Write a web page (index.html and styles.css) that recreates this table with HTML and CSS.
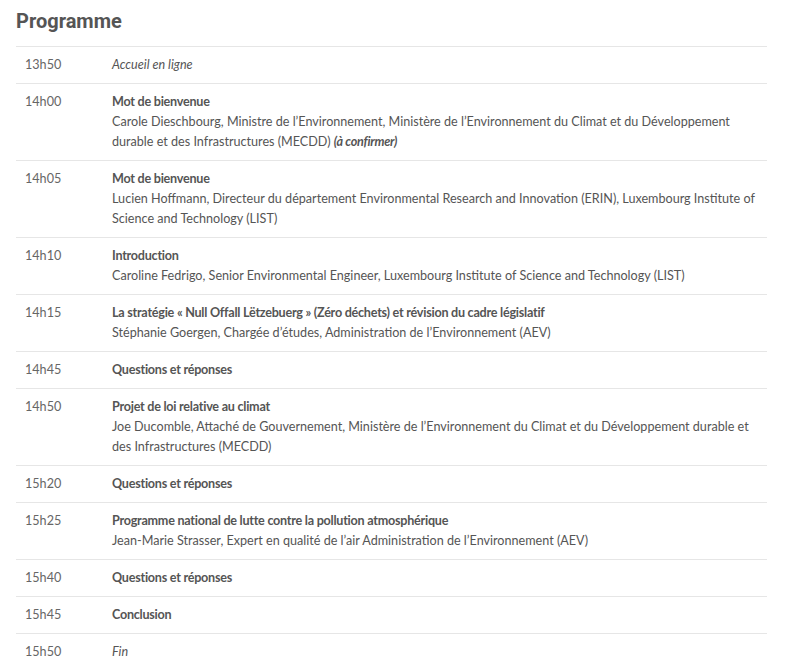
FILE: index.html
```html
<!DOCTYPE html>
<html lang="fr">
<head>
<meta charset="utf-8">
<link rel="stylesheet" href="styles.css">
</head>
<body>
<h2 class="title">Programme</h2>
<table class="prog">
<colgroup><col class="col-time"><col></colgroup>
<tbody>
<tr><td class="time">13h50</td><td class="item"><em>Accueil en ligne</em></td></tr>
<tr><td class="time">14h00</td><td class="item"><strong>Mot de bienvenue</strong><br>Carole Dieschbourg, Ministre de l’Environnement, Ministère de l’Environnement du Climat et du Développement<br>durable et des Infrastructures (MECDD) <strong><em>(à confirmer)</em></strong></td></tr>
<tr><td class="time">14h05</td><td class="item"><strong>Mot de bienvenue</strong><br>Lucien Hoffmann, Directeur du département Environmental Research and Innovation (ERIN), Luxembourg Institute of<br>Science and Technology (LIST)</td></tr>
<tr><td class="time">14h10</td><td class="item"><strong>Introduction</strong><br>Caroline Fedrigo, Senior Environmental Engineer, Luxembourg Institute of Science and Technology (LIST)</td></tr>
<tr><td class="time">14h15</td><td class="item"><strong>La stratégie « Null Offall Lëtzebuerg » (Zéro déchets) et révision du cadre législatif</strong><br>Stéphanie Goergen, Chargée d’études, Administration de l’Environnement (AEV)</td></tr>
<tr><td class="time">14h45</td><td class="item"><strong>Questions et réponses</strong></td></tr>
<tr><td class="time">14h50</td><td class="item"><strong>Projet de loi relative au climat</strong><br>Joe Ducomble, Attaché de Gouvernement, Ministère de l’Environnement du Climat et du Développement durable et<br>des Infrastructures (MECDD)</td></tr>
<tr><td class="time">15h20</td><td class="item"><strong>Questions et réponses</strong></td></tr>
<tr><td class="time">15h25</td><td class="item"><strong>Programme national de lutte contre la pollution atmosphérique</strong><br>Jean-Marie Strasser, Expert en qualité de l’air Administration de l’Environnement (AEV)</td></tr>
<tr><td class="time">15h40</td><td class="item"><strong>Questions et réponses</strong></td></tr>
<tr><td class="time">15h45</td><td class="item"><strong>Conclusion</strong></td></tr>
<tr><td class="time">15h50</td><td class="item"><em>Fin</em></td></tr>
</tbody>
</table>
</body>
</html>
```
FILE: styles.css
```css
html, body {
  margin: 0;
  padding: 0;
  background: #fff;
}
body {
  padding: 0 38px 0 16px;
  font-family: "Lato", "Open Sans", sans-serif;
  font-size: 12.6px;
  color: #555;
}
.title {
  font-family: "Roboto", "Liberation Sans", sans-serif;
  font-weight: 700;
  font-size: 20px;
  line-height: 24px;
  color: #555;
  margin: 9px 0 13px;
}
.prog {
  width: 100%;
  border-collapse: collapse;
  table-layout: fixed;
}
.col-time {
  width: 87px;
}
.prog td {
  border-top: 1px solid #e6e6e6;
  padding: 8px 9px;
  line-height: 20px;
  vertical-align: top;
  white-space: nowrap;
}
.prog .time {
  color: #666;
}
.prog .item strong {
  font-weight: 700;
  color: #555;
  letter-spacing: -0.25px;
}
```
